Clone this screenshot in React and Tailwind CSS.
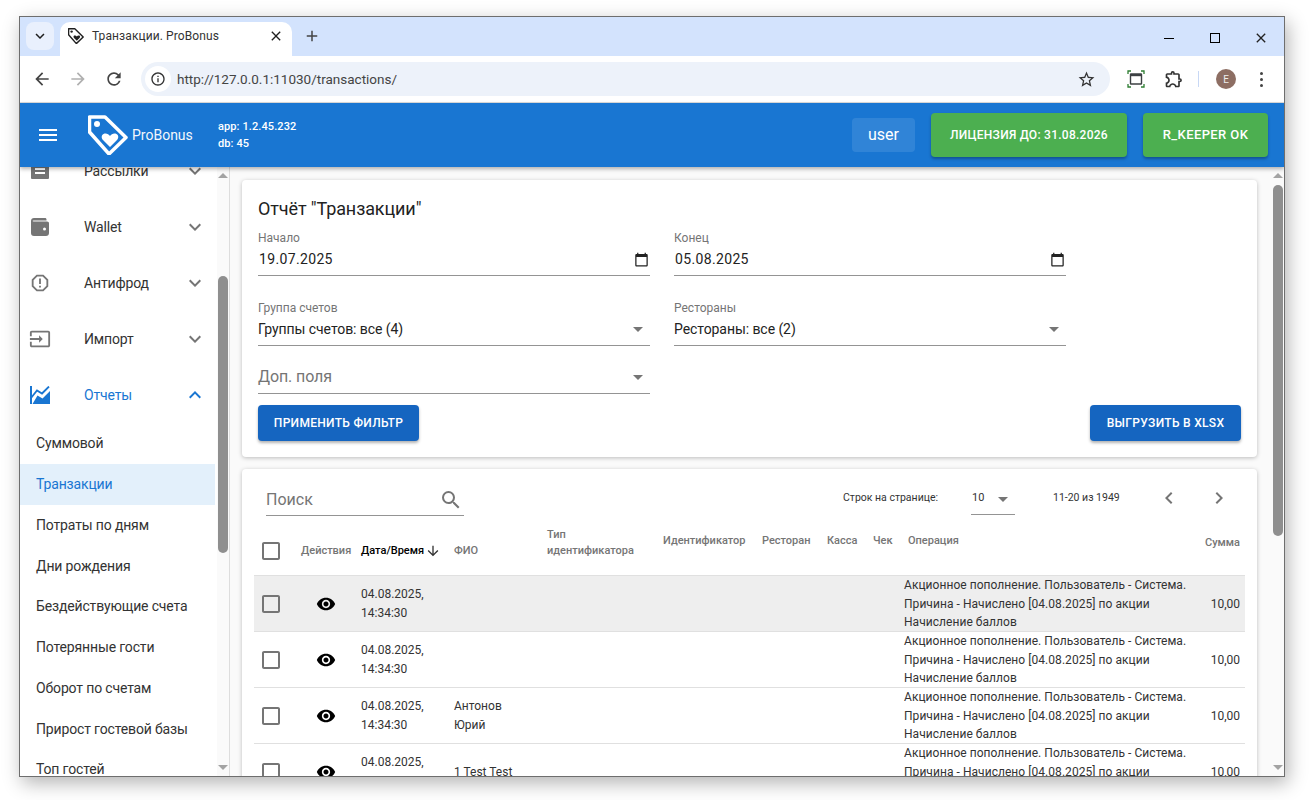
import React from 'react';
import { MdMenu, MdExpandMore, MdExpandLess, MdRemoveRedEye, MdCheckBoxOutlineBlank, MdSearch, MdChevronLeft, MdChevronRight, MdArrowDropDown, MdArrowDownward, MdInput, MdReportGmailerrorred, MdOutlineExtension, MdClose, MdAdd, MdArrowBack, MdArrowForward, MdRefresh, MdInfoOutline, MdStarBorder, MdCalendarToday } from 'react-icons/md';

const sansFont = { fontFamily: 'Roboto, sans-serif' };

function TagLogo({ size, color, strokeWidth }) {
  return (
    <svg width={size} height={size} viewBox="0 0 40 40" fill="none">
      <path d="M1.5 2H17L38 22.5L21 39L1.5 17Z" stroke={color} strokeWidth={strokeWidth} strokeLinejoin="round" />
      <circle cx="9" cy="9" r="3" fill={color} />
      <path d="M22 32L15 25C13 22.8 13.5 20 15.5 19C18 17.8 20.5 19 22 21C23.5 19 26 17.8 28.5 19C30.5 20 31 22.8 29 25Z" fill={color} />
    </svg>
  );
}

function MailIcon() {
  return (
    <svg width="20" height="20" viewBox="0 0 20 20" fill="#757575">
      <path d="M2 2H18A1 1 0 0 1 19 3V17A1 1 0 0 1 18 18H2A1 1 0 0 1 1 17V3A1 1 0 0 1 2 2ZM5 7V9H15V7ZM5 11V13H15V11Z" fillRule="evenodd" />
    </svg>
  );
}

function WalletIcon() {
  return (
    <svg width="20" height="20" viewBox="0 0 20 20" fill="#757575">
      <path d="M4 1H15C16 1 16.5 1.6 16.5 2.5V3.5H3.5C3 3.5 2.6 3.7 2.5 4C2.8 4.3 3.1 4.5 3.5 4.5H17C18.2 4.5 19 5.2 19 6.4V16C19 17.8 17.8 19 16 19H4C2 19 1 17.8 1 16V4C1 2.2 2.2 1 4 1ZM14.5 10.5A1.5 1.5 0 1 0 14.5 13.5A1.5 1.5 0 1 0 14.5 10.5Z" fillRule="evenodd" />
    </svg>
  );
}

function ChartIcon() {
  return (
    <svg width="20" height="18" viewBox="0 0 20 18" fill="none">
      <path d="M0 0H2V18H0Z" fill="#1976d2" />
      <path d="M1 12L7 4.5L12 7.5L19 0.5" stroke="#1976d2" strokeWidth="1.8" />
      <path d="M2.5 18L7.5 9.5L12.5 12.5L20 5V18Z" fill="#1976d2" />
    </svg>
  );
}

function ScreenIcon() {
  return (
    <svg width="18" height="18" viewBox="0 0 18 18" fill="none">
      <path d="M1 4V1H4M14 1H17V4M17 14V17H14M4 17H1V14" stroke="#2e7d32" strokeWidth="1.3" />
      <rect x="3.5" y="4" width="11" height="10" rx="0.5" stroke="#3c4043" strokeWidth="1.4" />
      <rect x="3.5" y="4" width="11" height="2.2" fill="#3c4043" />
    </svg>
  );
}

function ScrollArrow({ up }) {
  return (
    <div className={up ? 'w-0 h-0 border-x-[5px] border-x-transparent border-b-[5px] border-b-[#a3a3a3]' : 'w-0 h-0 border-x-[5px] border-x-transparent border-t-[5px] border-t-[#a3a3a3]'}></div>
  );
}

function SideItem({ icon, label, open }) {
  return (
    <div className={`flex items-center h-14 shrink-0 pl-[10px] text-sm -tracking-[0.15px] ${open ? 'text-[#1976d2]' : 'text-[#333]'}`}>
      <div className="w-[54px] flex">{icon}</div>
      <div className="flex-1">{label}</div>
      {open ? <MdExpandLess size={24} className="text-[#1976d2] mr-[8px]" /> : <MdExpandMore size={24} className="text-[#757575] mr-[8px]" />}
    </div>
  );
}

function Field({ label, value }) {
  return (
    <div className="w-[392px] h-[46px] flex flex-col border-b border-[#949494]">
      <div className="text-xs leading-4 h-4 text-[#757575]">{label}</div>
      <div className="flex-1 flex items-center justify-between pb-[3px] text-sm -tracking-[0.07px] text-[#222]">{value}</div>
    </div>
  );
}

function DateValue({ value }) {
  return (
    <>
      <span className="pl-px tracking-[0.35px]">{value}</span>
      <MdCalendarToday size={15} className="text-[#222] mr-[1px]" />
    </>
  );
}

function SelectValue({ value }) {
  return (
    <>
      <span>{value}</span>
      <MdArrowDropDown size={24} className="text-[#757575]" />
    </>
  );
}

const columns = 'grid grid-cols-[47px_60px_93px_93px_116px_99px_65px_46px_31px_286px_55px]';

const rows = [
  { name: [], active: true },
  { name: [] },
  { name: ['Антонов', 'Юрий'] },
  { name: ['1 Test Test'] },
];

function TableRow({ name, active }) {
  return (
    <div className={`${columns} h-14 shrink-0 items-center border-b border-[#e0e0e0] text-xs leading-[18.5px] text-[#333] ${active ? 'bg-[#eeeeee]' : ''}`}>
      <div className="pl-[5px]"><MdCheckBoxOutlineBlank size={24} className="text-[#757575]" /></div>
      <div className="pl-[15px]"><MdRemoveRedEye size={20} className="text-black" /></div>
      <div>04.08.2025,<br />14:34:30</div>
      <div>{name.map(n => <div key={n}>{n}</div>)}</div>
      <div></div>
      <div></div>
      <div></div>
      <div></div>
      <div></div>
      <div className="tracking-[0.05px]">
        Акционное пополнение. Пользователь - Система.<br />
        Причина - Начислено [04.08.2025] по акции<br />
        Начисление баллов
      </div>
      <div className="text-right pr-[5px]">10,00</div>
    </div>
  );
}

export default function App() {
  return (
    <div className="w-[1310px] h-[800px] bg-white pt-4 pl-[19px] overflow-hidden" style={sansFont}>
      <div className="w-[1266px] h-[761px] border border-[#6e6e6e] bg-white flex flex-col overflow-hidden shadow-[3px_6px_18px_rgba(0,0,0,0.3)]">
        {/* Tab strip */}
        <div className="h-[39px] shrink-0 bg-[#d3e3fd] flex items-end pl-[6px]">
          <div className="w-7 h-7 mb-[6px] rounded-lg bg-[#e9f0fd] flex items-center justify-center"><MdExpandMore size={18} className="text-[#1f1f1f]" /></div>
          <div className="ml-[6px] w-[232px] h-[34px] bg-white rounded-t-[10px] flex items-center pl-[8px] pr-[8px] pb-[6px] text-xs tracking-[0.1px] text-[#333]">
            <TagLogo size={16} color="#1f1f1f" strokeWidth={3.5} />
            <span className="ml-2 flex-1">Транзакции. ProBonus</span>
            <MdClose size={16} className="text-[#1f1f1f]" />
          </div>
          <div className="ml-[11px] mb-[11px]"><MdAdd size={18} className="text-[#444]" /></div>
          <div className="flex-1"></div>
          <div className="flex items-center mb-[10px] mr-[18px] gap-[36px]">
            <div className="w-[10px] h-px bg-black"></div>
            <div className="w-[10px] h-[10px] border border-black"></div>
            <MdClose size={16} className="text-[#222] -mx-[3px]" />
          </div>
        </div>
        {/* Toolbar */}
        <div className="h-[47px] shrink-0 bg-white rounded-tr-lg border-b border-[#dddddd] flex items-center pl-[12px] text-[#444]">
          <MdArrowBack size={20} />
          <MdArrowForward size={20} className="ml-[16px] text-[#b0b0b0]" />
          <MdRefresh size={20} className="ml-[16px]" />
          <div className="ml-[17px] w-[969px] h-[34px] rounded-full bg-[#edf2fa] flex items-center pl-[4px] pr-[14px]">
            <div className="w-[26px] h-[26px] rounded-full bg-white flex items-center justify-center"><MdInfoOutline size={16} className="text-[#333]" /></div>
            <span className="ml-[6px] flex-1 text-[13.5px] text-[#444]">http://127.0.0.1:11030/transactions/</span>
            <MdStarBorder size={19} className="text-[#333]" />
          </div>
          <div className="ml-[17px]"><ScreenIcon /></div>
          <MdOutlineExtension size={20} className="ml-[19px] text-[#333]" />
          <div className="ml-[14px] w-px h-4 bg-[#c8d8f5]"></div>
          <div className="ml-[17px] w-5 h-5 rounded-full bg-[#8d6e63] text-[#eee] text-[10px] flex items-center justify-center">E</div>
          <div className="ml-[24px] flex flex-col gap-[3px]">
            <div className="w-[3px] h-[3px] rounded-full bg-[#444]"></div>
            <div className="w-[3px] h-[3px] rounded-full bg-[#444]"></div>
            <div className="w-[3px] h-[3px] rounded-full bg-[#444]"></div>
          </div>
        </div>
        {/* App header */}
        <div className="h-16 shrink-0 bg-[#1976d2] relative z-10 flex items-center text-white shadow-[0_2px_4px_rgba(0,0,0,0.3)] pr-[16px]">
          <MdMenu size={24} className="ml-[16px]" />
          <div className="ml-[28px]"><TagLogo size={40} color="#ffffff" strokeWidth={3.5} /></div>
          <div className="ml-[4px] w-[86px] text-sm opacity-95">ProBonus</div>
          <div className="text-[11px] leading-[17px] font-medium tracking-[0.1px]">
            <div>app: 1.2.45.232</div>
            <div>db: 45</div>
          </div>
          <div className="flex-1"></div>
          <div className="w-[63px] h-[34px] rounded bg-white/10 flex items-center justify-center text-base">user</div>
          <div className="ml-4 w-[196px] h-11 rounded bg-[#4caf50] flex items-center justify-center text-xs font-medium tracking-[0.26px] shadow-[0_2px_3px_rgba(0,0,0,0.3)]">ЛИЦЕНЗИЯ ДО: 31.08.2026</div>
          <div className="ml-4 w-[125px] h-11 rounded bg-[#4caf50] flex items-center justify-center text-[13px] font-medium tracking-[0.4px] shadow-[0_2px_3px_rgba(0,0,0,0.3)]">R_KEEPER OK</div>
        </div>
        {/* Body */}
        <div className="flex-1 flex min-h-0 overflow-hidden">
          {/* Sidebar */}
          <div className="w-[210px] shrink-0 flex border-r border-[#dddddd] overflow-hidden">
            <div className="flex-1 flex flex-col -mt-6 mr-[2px]">
              <SideItem icon={<MailIcon />} label="Рассылки" />
              <SideItem icon={<WalletIcon />} label="Wallet" />
              <SideItem icon={<MdReportGmailerrorred size={22} className="text-[#757575] -ml-px" />} label="Антифрод" />
              <SideItem icon={<MdInput size={22} className="text-[#757575] -ml-px" />} label="Импорт" />
              <SideItem icon={<ChartIcon />} label="Отчеты" open />
              {['Суммовой', 'Транзакции', 'Потраты по дням', 'Дни рождения', 'Бездействующие счета', 'Потерянные гости', 'Оборот по счетам', 'Прирост гостевой базы', 'Топ гостей'].map(item => (
                <div key={item} className={`h-[40.75px] shrink-0 flex items-center pl-4 text-sm -tracking-[0.15px] ${item === 'Транзакции' ? 'bg-[#e3f0fb] text-[#1976d2]' : 'text-[#333]'}`}>{item}</div>
              ))}
            </div>
            <div className="w-[12px] shrink-0 bg-[#fafafa] flex flex-col items-center pt-[6px] pb-[6px]">
              <ScrollArrow up />
              <div className="mt-[98px] w-[10px] h-[277px] rounded-full bg-[#8f8f8f]"></div>
              <div className="flex-1"></div>
              <ScrollArrow />
            </div>
          </div>
          {/* Main */}
          <div className="flex-1 min-w-0 bg-[#fafafa] pl-3 pr-[14px] pt-[13px] overflow-hidden flex flex-col gap-3">
            {/* Filter card */}
            <div className="h-[277px] shrink-0 bg-white rounded shadow-[0_1px_4px_rgba(0,0,0,0.25)] px-4 pt-[15px]">
              <div className="text-lg leading-7 -tracking-[0.1px] text-[#222] h-[35px]">Отчёт "Транзакции"</div>
              <div className="flex gap-6">
                <Field label="Начало" value={<DateValue value="19.07.2025" />} />
                <Field label="Конец" value={<DateValue value="05.08.2025" />} />
              </div>
              <div className="flex gap-6 mt-6">
                <Field label="Группа счетов" value={<SelectValue value="Группы счетов: все (4)" />} />
                <Field label="Рестораны" value={<SelectValue value="Рестораны: все (2)" />} />
              </div>
              <div className="w-[392px] h-[47px] mt-px flex items-end justify-between pb-[4px] border-b border-[#949494] text-base -tracking-[0.1px] text-[#757575]">
                <span>Доп. поля</span>
                <MdArrowDropDown size={24} className="text-[#757575]" />
              </div>
              <div className="mt-[11px] flex justify-between">
                <div className="w-[161px] h-9 rounded bg-[#1565c0] text-white text-xs font-medium tracking-[0.3px] flex items-center justify-center shadow-[0_2px_3px_rgba(0,0,0,0.3)]">ПРИМЕНИТЬ ФИЛЬТР</div>
                <div className="w-[151px] h-9 rounded bg-[#1565c0] text-white text-xs font-medium tracking-[0.3px] flex items-center justify-center shadow-[0_2px_3px_rgba(0,0,0,0.3)]">ВЫГРУЗИТЬ В XLSX</div>
              </div>
            </div>
            {/* Table card */}
            <div className="flex-1 bg-white rounded-t shadow-[0_1px_4px_rgba(0,0,0,0.25)] px-3 flex flex-col">
              <div className="h-14 shrink-0 flex items-start text-[#333]">
                <div className="ml-3 mt-[15px] w-[198px] h-8 border-b border-[#949494] flex items-center justify-between text-base text-[#757575]">
                  <span>Поиск</span>
                  <MdSearch size={24} className="mr-[1px] text-[#757575]" />
                </div>
                <div className="ml-[379px] mt-[21px] text-[10.5px] leading-4 w-[128px]">Строк на странице:</div>
                <div className="mt-[14px] w-11 h-[32px] border-b border-[#949494] flex items-center text-[11px] pl-px">
                  <span className="flex-1">10</span>
                  <MdArrowDropDown size={24} className="text-[#757575]" />
                </div>
                <div className="ml-[38px] mt-[21px] text-[10.5px] leading-4 w-[104px]">11-20 из 1949</div>
                <MdChevronLeft size={24} className="mt-[17px] text-[#757575]" />
                <MdChevronRight size={24} className="ml-[26px] mt-[17px] text-[#757575]" />
              </div>
              <div className={`${columns} h-[51px] pt-[2px] shrink-0 items-center border-b border-[#e0e0e0] text-[11px] leading-4 font-medium text-[#757575]`}>
                <div className="pl-[5px]"><MdCheckBoxOutlineBlank size={24} className="text-[#757575]" /></div>
                <div>Действия</div>
                <div className="text-black flex items-center whitespace-nowrap">Дата/Время<MdArrowDownward size={16} className="ml-px text-[#333]" /></div>
                <div>ФИО</div>
                <div className="self-start">Тип<br />идентификатора</div>
                <div className="self-start pt-[6px]">Идентификатор</div>
                <div className="self-start pt-[6px]">Ресторан</div>
                <div className="self-start pt-[6px]">Касса</div>
                <div className="self-start pt-[6px]">Чек</div>
                <div className="self-start pt-[6px] pl-1">Операция</div>
                <div className="text-right pr-[5px] -ml-4 -mt-4">Сумма</div>
              </div>
              {rows.map((row, idx) => <TableRow key={idx} name={row.name} active={row.active} />)}
            </div>
          </div>
          {/* Main scrollbar */}
          <div className="w-[13px] shrink-0 bg-[#fafafa] flex flex-col items-center pt-[6px] pb-[6px]">
            <ScrollArrow up />
            <div className="mt-[7px] w-[10px] h-[351px] rounded-full bg-[#8f8f8f]"></div>
            <div className="flex-1"></div>
            <ScrollArrow />
          </div>
        </div>
      </div>
    </div>
  );
}
